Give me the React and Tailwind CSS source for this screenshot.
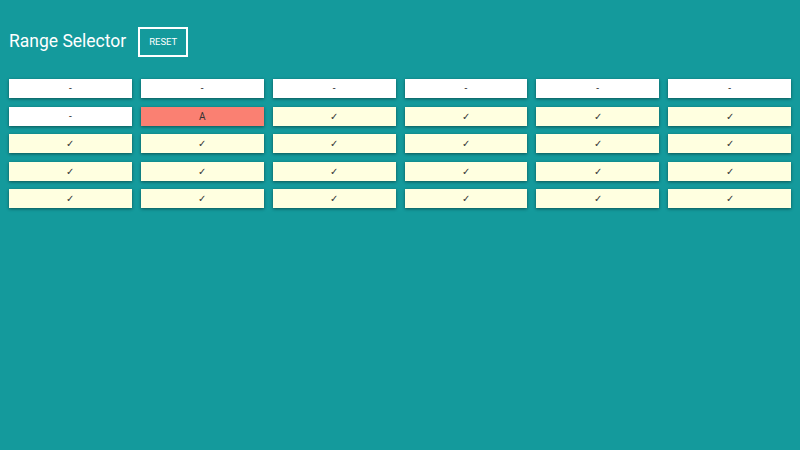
import React, { useState } from "react";

const COLS = 6;
const ROWS = 5;

// cell state: first row and first cell of row 2 are empty, (1,1) is anchor
const cellFor = (r, c) => {
  if (r === 0 || (r === 1 && c === 0)) return { text: "-", kind: "empty" };
  if (r === 1 && c === 1) return { text: "A", kind: "anchor" };
  return { text: "✓", kind: "picked" };
};

const App = () => {
  const [, setTick] = useState(0);

  return (
    <div
      className="w-full min-h-[450px] bg-[#149a9c] px-[9px] pt-[27px]"
      style={{ fontFamily: "Roboto, 'Liberation Sans', sans-serif" }}
    >
      {/* Header */}
      <div className="flex items-center h-[30px]">
        <h1 className="text-white text-[17.5px] leading-none">Range Selector</h1>
        <button
          onClick={() => setTick((t) => t + 1)}
          className="ml-[12px] w-[50px] h-[30px] border-2 border-white text-white text-[9.5px] leading-none"
        >
          RESET
        </button>
      </div>

      {/* Grid */}
      <div className="mt-[22px] grid grid-cols-6 w-[782px] gap-x-[9px] gap-y-[8.5px]">
        {Array.from({ length: ROWS }).map((_, r) =>
          Array.from({ length: COLS }).map((_, c) => {
            const cell = cellFor(r, c);
            const bg =
              cell.kind === "empty"
                ? "bg-white"
                : cell.kind === "anchor"
                ? "bg-[#fa8072]"
                : "bg-[#ffffe0]";
            return (
              <div
                key={`${r}-${c}`}
                className={`${bg} h-[19px] flex items-center justify-center text-[10px] text-[#333] shadow-[0_1px_3px_rgba(0,0,0,0.45)]`}
              >
                {cell.text}
              </div>
            );
          })
        )}
      </div>
    </div>
  );
};

export default App;
